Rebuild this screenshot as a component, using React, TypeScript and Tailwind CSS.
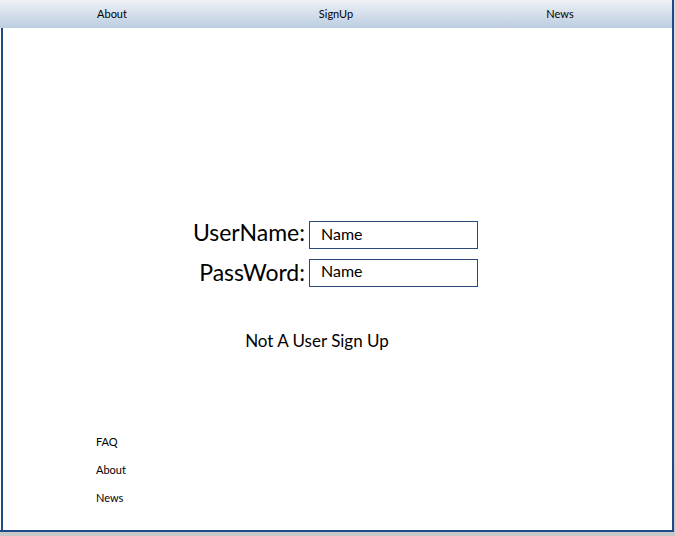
export default function App() {
  const nav = ['About', 'SignUp', 'News'];
  const footer = ['FAQ', 'About', 'News'];

  return (
    <div className="w-[675px] h-[536px] bg-gradient-to-b from-[#dcdcdc] to-[#c8c8c8] font-['Lato','Open_Sans',sans-serif] text-black">
      <div className="w-[674px] h-[532px] bg-white border-r-2 border-b-2 border-[#1f4a86] flex flex-col">
        <div className="h-[28px] grid grid-cols-3 items-center bg-gradient-to-b from-[#eef1f6] to-[#bccde1] text-[11px]">
          {nav.map((n) => (
            <div key={n} className="text-center">
              {n}
            </div>
          ))}
        </div>
        <div className="flex-1 flex flex-col ml-[1px] border-l-2 border-[#1f4a86]">
          <div className="pt-[193px] grid grid-cols-[302px_169px] gap-x-[4px] gap-y-[10px] items-start">
            <div className="text-right text-[23px] leading-[22px]">UserName:</div>
            <div className="h-[28px] border border-[#2b4a7a] pl-[11px] text-[16px] leading-[24px]">Name</div>
            <div className="text-right text-[23px] leading-[26px]">PassWord:</div>
            <div className="h-[28px] border border-[#2b4a7a] pl-[11px] text-[16px] leading-[22px]">Name</div>
          </div>
          <div className="mt-[42px] w-[628px] text-center text-[17px] leading-[24px]">Not A User Sign Up</div>
          <div className="mt-[82px] pl-[93px] flex flex-col gap-[14px] text-[11px] leading-[14px]">
            {footer.map((f) => (
              <div key={f}>{f}</div>
            ))}
          </div>
        </div>
      </div>
    </div>
  );
}
